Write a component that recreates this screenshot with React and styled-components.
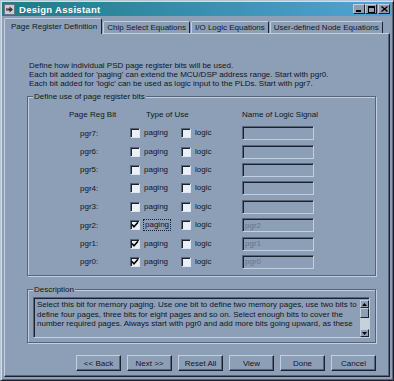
import React from 'react';
import styled, { createGlobalStyle } from 'styled-components';

const FACE = '#8d9fb6';
const LIGHT = '#c3cfdf';
const SHADOW = '#56637a';
const DARK = '#1c222c';
const TEXT = '#11151d';

const GlobalStyle = createGlobalStyle`
  * { box-sizing: border-box; }
  body {
    margin: 0;
    background: ${FACE};
    font-family: "Liberation Sans", Arial, sans-serif;
    font-size: 8px;
    color: ${TEXT};
  }
`;

const Window = styled.div`
  width: 394px;
  height: 381px;
  background: ${FACE};
  border: 1px solid;
  border-color: #b8c5d6 ${DARK} ${DARK} #b8c5d6;
  box-shadow: inset 1px 1px 0 #d4dde8, inset -1px -1px 0 ${SHADOW};
  padding: 1px;
  display: flex;
  flex-direction: column;
`;

const TitleBar = styled.div`
  height: 14px;
  display: flex;
  align-items: center;
  padding: 0 2px;
  background: linear-gradient(to right, #1d7c85, #52a3d8);
`;

const TitleText = styled.div`
  margin-left: 4px;
  color: #fff;
  font-weight: bold;
  font-size: 9.5px;
  letter-spacing: 0.3px;
`;

const Controls = styled.div`
  margin-left: auto;
  display: flex;
`;

const CtrlButton = styled.div`
  width: 12px;
  height: 10px;
  margin-left: ${p => (p.$gap ? '1px' : '0')};
  background: ${FACE};
  border: 1px solid;
  border-color: ${LIGHT} ${DARK} ${DARK} ${LIGHT};
  display: flex;
  align-items: center;
  justify-content: center;
`;

const TabRow = styled.div`
  height: 18px;
  margin-bottom: -1px;
  padding-left: 2px;
  display: flex;
  align-items: flex-end;
  position: relative;
  z-index: 1;
`;

const Tab = styled.div`
  height: ${p => (p.$active ? '16px' : '12px')};
  margin-bottom: ${p => (p.$active ? '0' : '1px')};
  padding: ${p => (p.$active ? '0 4px 0 6px' : '0 3px')};
  margin-left: ${p => (p.$active ? '0' : '1px')};
  display: flex;
  align-items: center;
  white-space: nowrap;
  background: ${FACE};
  border: 1px solid;
  border-bottom: none;
  border-color: ${LIGHT} ${DARK} transparent ${LIGHT};
  border-radius: 2px 2px 0 0;
`;

const Panel = styled.div`
  flex: 1;
  margin: 0 2px 2px;
  border: 1px solid;
  border-color: ${LIGHT} ${DARK} ${DARK} ${LIGHT};
  box-shadow: inset -1px -1px 0 ${SHADOW};
  padding: 27px 13px 0 22px;
  display: flex;
  flex-direction: column;
`;

const Intro = styled.div`
  margin-left: 2px;
  line-height: 9px;
  white-space: nowrap;
`;

const Group = styled.div`
  position: relative;
  margin-top: ${p => p.$top}px;
  border: 1px solid ${SHADOW};
  box-shadow: inset 1px 1px 0 ${LIGHT}, 1px 1px 0 ${LIGHT};
  padding: ${p => p.$pad};
`;

const Legend = styled.span`
  position: absolute;
  top: -5px;
  left: 5px;
  padding: 0 1px;
  line-height: 9px;
  background: ${FACE};
`;

const BitGrid = styled.div`
  display: grid;
  grid-template-columns: 61px 51px 61px 1fr;
  grid-template-rows: 20px repeat(8, 18.4px);
  align-items: center;
`;

const Header = styled.div`
  grid-column: ${p => p.$span || 'auto'};
  padding-left: ${p => p.$indent || 0}px;
  white-space: nowrap;
`;

const BitLabel = styled.div`
  padding-left: 11px;
`;

const Option = styled.div`
  display: flex;
  align-items: center;
`;

const Box = styled.span`
  width: 10px;
  height: 10px;
  flex: none;
  background: #eaf0f6;
  border: 1px solid;
  border-color: ${SHADOW} #dde5ee #dde5ee ${SHADOW};
  box-shadow: inset 1px 1px 0 ${DARK};
  display: flex;
  align-items: center;
  justify-content: center;
`;

const OptionText = styled.span`
  margin-left: ${p => (p.$focus ? '3px' : '4px')};
  padding: 0 ${p => (p.$focus ? '1px' : '0')};
  line-height: 10px;
  border: ${p => (p.$focus ? `1px dotted ${DARK}` : 'none')};
`;

const SignalInput = styled.input`
  width: 72px;
  height: 14px;
  padding: 0 0 0 2px;
  margin: 0;
  font: inherit;
  font-size: 8px;
  color: #66758c;
  background: ${FACE};
  border: 1px solid;
  border-color: ${SHADOW} ${LIGHT} ${LIGHT} ${SHADOW};
  box-shadow: inset 1px 1px 0 ${DARK};
  outline: none;
`;

const TextBox = styled.div`
  height: 41px;
  display: flex;
  border: 1px solid;
  border-color: ${SHADOW} ${LIGHT} ${LIGHT} ${SHADOW};
  box-shadow: inset 1px 1px 0 ${DARK};
  padding: 1px 0 0 1px;
`;

const TextBody = styled.div`
  flex: 1;
  overflow: hidden;
  padding: 1px 0 0 2px;
  line-height: 9.5px;
  white-space: nowrap;
`;

const ScrollBar = styled.div`
  width: 9px;
  display: flex;
  flex-direction: column;
  padding-top: 1px;
`;

const ScrollBtn = styled.div`
  height: ${p => p.$h}px;
  flex: none;
  background: ${FACE};
  border: 1px solid;
  border-color: ${LIGHT} ${DARK} ${DARK} ${LIGHT};
  display: flex;
  align-items: center;
  justify-content: center;
`;

const Track = styled.div`
  flex: 1;
  background: #c6d1de;
`;

const ButtonRow = styled.div`
  margin-top: 12px;
  display: flex;
  justify-content: flex-end;
  gap: 6px;
`;

const Button = styled.button`
  width: 45px;
  height: 16px;
  padding: 0;
  font: inherit;
  font-size: 8px;
  color: ${TEXT};
  background: ${FACE};
  border: 1px solid;
  border-color: ${LIGHT} ${DARK} ${DARK} ${LIGHT};
  box-shadow: inset -1px -1px 0 ${SHADOW};
`;

const Check = () => (
  <svg width="8" height="8" viewBox="0 0 8 8">
    <path d="M1 3.5 L3 5.8 L7 1.2" fill="none" stroke="#000" strokeWidth="1.6" />
  </svg>
);

const Arrow = ({ down }) => (
  <svg width="5" height="3" viewBox="0 0 5 3">
    <path d={down ? 'M0 0h5L2.5 3z' : 'M0 3h5L2.5 0z'} fill="#000" />
  </svg>
);

const bits = [7, 6, 5, 4, 3, 2, 1, 0];

export default function App() {
  return (
    <>
      <GlobalStyle />
      <Window>
        <TitleBar>
          <svg width="11" height="11" viewBox="0 0 11 11">
            <rect x="0.5" y="0.5" width="10" height="10" fill="#c7ced8" stroke="#6b7480" />
            <path d="M2 4.5h3.5V2.5l3.5 3-3.5 3v-2H2z" fill="#3a3030" />
            <path d="M2 4.5h2v2H2z" fill="#a04a3a" />
          </svg>
          <TitleText>Design Assistant</TitleText>
          <Controls>
            <CtrlButton>
              <svg width="6" height="6" viewBox="0 0 6 6"><rect x="0" y="4" width="5" height="2" fill="#000" /></svg>
            </CtrlButton>
            <CtrlButton>
              <svg width="7" height="7" viewBox="0 0 7 7"><rect x="0.5" y="0.5" width="6" height="6" fill="none" stroke="#000" /><rect x="0" y="0" width="7" height="2" fill="#000" /></svg>
            </CtrlButton>
            <CtrlButton $gap>
              <svg width="7" height="6" viewBox="0 0 7 6"><path d="M0.5 0.5 L6.5 5.5 M6.5 0.5 L0.5 5.5" stroke="#000" strokeWidth="1.4" /></svg>
            </CtrlButton>
          </Controls>
        </TitleBar>

        <TabRow>
          <Tab $active>Page Register Definition</Tab>
          <Tab>Chip Select Equations</Tab>
          <Tab>I/O Logic Equations</Tab>
          <Tab>User-defined Node Equations</Tab>
        </TabRow>

        <Panel>
          <Intro>
            Define how individual PSD page register bits will be used.<br />
            Each bit added for 'paging' can extend the MCU/DSP address range. Start with pgr0.<br />
            Each bit added for 'logic' can be used as logic input to the PLDs. Start with pgr7.
          </Intro>

          <Group $top={8} $pad="7px 0 4px 41px">
            <Legend>Define use of page register bits</Legend>
            <BitGrid>
              <Header>Page Reg Bit</Header>
              <Header $span="2 / span 2" $indent={16}>Type of Use</Header>
              <Header>Name of Logic Signal</Header>
              {bits.map(n => {
                const paging = n <= 2;
                return (
                  <React.Fragment key={n}>
                    <BitLabel>pgr{n}:</BitLabel>
                    <Option>
                      <Box>{paging && <Check />}</Box>
                      <OptionText $focus={n === 2}>paging</OptionText>
                    </Option>
                    <Option>
                      <Box />
                      <OptionText>logic</OptionText>
                    </Option>
                    <SignalInput readOnly value={paging ? `pgr${n}` : ''} />
                  </React.Fragment>
                );
              })}
            </BitGrid>
          </Group>

          <Group $top={13} $pad="7px 5px 4px 5px">
            <Legend>Description</Legend>
            <TextBox>
              <TextBody>
                Select this bit for memory paging. Use one bit to define two memory pages, use two bits to<br />
                define four pages, three bits for eight pages and so on. Select enough bits to cover the<br />
                number required pages. Always start with pgr0 and add more bits going upward, as these
              </TextBody>
              <ScrollBar>
                <ScrollBtn $h={8}><Arrow /></ScrollBtn>
                <ScrollBtn $h={10} />
                <Track />
                <ScrollBtn $h={8}><Arrow down /></ScrollBtn>
              </ScrollBar>
            </TextBox>
          </Group>

          <ButtonRow>
            <Button>&lt;&lt; Back</Button>
            <Button>Next &gt;&gt;</Button>
            <Button>Reset All</Button>
            <Button>View</Button>
            <Button>Done</Button>
            <Button>Cancel</Button>
          </ButtonRow>
        </Panel>
      </Window>
    </>
  );
}
